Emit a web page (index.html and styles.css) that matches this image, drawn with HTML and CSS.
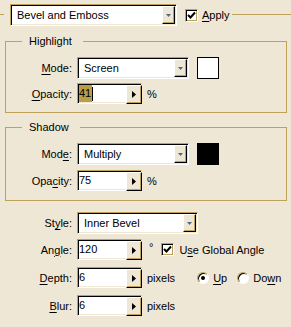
FILE: index.html
```html
<!DOCTYPE html>
<html lang="en">
<head>
    <meta charset="UTF-8">
    <meta name="viewport" content="width=device-width, initial-scale=1.0">
    <title>Bevel and Emboss</title>
    <link rel="stylesheet" href="styles.css">
</head>
<body>
    <main class="panel">
        <div class="head">
            <span class="rule rule-short"></span>
            <div class="select select-effect">
                <span class="value">Bevel and Emboss</span>
                <span class="drop"><svg width="5" height="3" viewBox="0 0 5 3"><path d="M0 0h5L2.5 3z" fill="#4c6a88"/></svg></span>
            </div>
            <label class="check check-apply">
                <span class="box"><svg width="9" height="9" viewBox="0 0 9 9"><path d="M1 4l2.5 2.5L8 1.5" fill="none" stroke="#000" stroke-width="2"/></svg></span>
                <span class="text"><u>A</u>pply</span>
            </label>
            <span class="rule rule-long"></span>
        </div>

        <fieldset class="group group-highlight">
            <legend>Highlight</legend>
            <div class="row">
                <span class="label"><u>M</u>ode:</span>
                <div class="select select-mode">
                    <span class="value">Screen</span>
                    <span class="drop"><svg width="5" height="3" viewBox="0 0 5 3"><path d="M0 0h5L2.5 3z" fill="#4c6a88"/></svg></span>
                </div>
                <span class="swatch swatch-white"></span>
            </div>
            <div class="row">
                <span class="label"><u>O</u>pacity:</span>
                <div class="spin">
                    <span class="value"><span class="sel">41</span><span class="caret"></span></span>
                    <span class="step"><svg width="4" height="7" viewBox="0 0 4 7"><path d="M0 0l4 3.5L0 7z" fill="#000"/></svg></span>
                </div>
                <span class="unit">%</span>
            </div>
        </fieldset>

        <fieldset class="group group-shadow">
            <legend>Shadow</legend>
            <div class="row">
                <span class="label">Mod<u>e</u>:</span>
                <div class="select select-mode">
                    <span class="value">Multiply</span>
                    <span class="drop"><svg width="5" height="3" viewBox="0 0 5 3"><path d="M0 0h5L2.5 3z" fill="#4c6a88"/></svg></span>
                </div>
                <span class="swatch swatch-black"></span>
            </div>
            <div class="row">
                <span class="label">Opa<u>c</u>ity:</span>
                <div class="spin">
                    <span class="value">75</span>
                    <span class="step"><svg width="4" height="7" viewBox="0 0 4 7"><path d="M0 0l4 3.5L0 7z" fill="#000"/></svg></span>
                </div>
                <span class="unit">%</span>
            </div>
        </fieldset>

        <div class="plain">
            <div class="row row-style">
                <span class="label">St<u>y</u>le:</span>
                <div class="select select-style">
                    <span class="value">Inner Bevel</span>
                    <span class="drop"><svg width="5" height="3" viewBox="0 0 5 3"><path d="M0 0h5L2.5 3z" fill="#4c6a88"/></svg></span>
                </div>
            </div>
            <div class="row row-angle">
                <span class="label">An<u>g</u>le:</span>
                <div class="spin">
                    <span class="value">120</span>
                    <span class="step"><svg width="4" height="7" viewBox="0 0 4 7"><path d="M0 0l4 3.5L0 7z" fill="#000"/></svg></span>
                </div>
                <span class="unit unit-deg">°</span>
                <label class="check check-global">
                    <span class="box"><svg width="9" height="9" viewBox="0 0 9 9"><path d="M1 4l2.5 2.5L8 1.5" fill="none" stroke="#000" stroke-width="2"/></svg></span>
                    <span class="text">U<u>s</u>e Global Angle</span>
                </label>
            </div>
            <div class="row row-spaced">
                <span class="label"><u>D</u>epth:</span>
                <div class="spin">
                    <span class="value">6</span>
                    <span class="step"><svg width="4" height="7" viewBox="0 0 4 7"><path d="M0 0l4 3.5L0 7z" fill="#000"/></svg></span>
                </div>
                <span class="unit">pixels</span>
                <label class="radio radio-up">
                    <span class="dot on"></span>
                    <span class="text"><u>U</u>p</span>
                </label>
                <label class="radio radio-down">
                    <span class="dot"></span>
                    <span class="text">Do<u>w</u>n</span>
                </label>
            </div>
            <div class="row row-spaced">
                <span class="label"><u>B</u>lur:</span>
                <div class="spin">
                    <span class="value">6</span>
                    <span class="step"><svg width="4" height="7" viewBox="0 0 4 7"><path d="M0 0l4 3.5L0 7z" fill="#000"/></svg></span>
                </div>
                <span class="unit">pixels</span>
            </div>
        </div>
    </main>
</body>
</html>
```

FILE: styles.css
```css
body {
    margin: 0;
    font-family: "Liberation Sans", Arial, sans-serif;
    font-size: 11px;
    line-height: 14px;
    color: #000;
    background: #efe7d5;
}

.panel {
    width: 291px;
    height: 327px;
    overflow: hidden;
}

u {
    text-decoration-thickness: 1px;
    text-underline-offset: 2px;
}

/* top line with effect picker */
.head {
    display: flex;
    align-items: center;
    height: 22px;
    margin-top: 4px;
}
.rule {
    align-self: flex-start;
    height: 1px;
    margin-top: 10px;
    background: #bfa259;
}
.rule-short {
    width: 4px;
    margin-right: 6px;
}
.rule-long {
    flex: 1;
    margin-left: 2px;
}

/* sunken fields */
.select,
.spin {
    display: flex;
    box-sizing: border-box;
    border: 1px solid;
    border-color: #bfa259 #fff #fff #bfa259;
    box-shadow: inset 1px 1px #000, inset -1px -1px #efe7d5;
    background: #fff;
    padding: 1px;
}
.select {
    height: 22px;
}
.select .value {
    flex: 1;
    padding-left: 5px;
    line-height: 18px;
    white-space: nowrap;
}
.drop {
    display: grid;
    place-content: center;
    box-sizing: border-box;
    width: 13px;
    border: 1px solid;
    border-color: #fff #000 #000 #fff;
    box-shadow: inset -1px -1px #bfa259;
    background: #efe7d5;
}
.select-effect {
    width: 167px;
}
.select-mode {
    width: 112px;
}
.select-style {
    width: 121px;
}

.spin {
    width: 65px;
    height: 21px;
}
.spin .value {
    flex: 1;
    display: flex;
    align-items: center;
    line-height: 17px;
}
.sel {
    background: #b89c48;
    padding-right: 1px;
}
.caret {
    width: 1px;
    height: 14px;
    background: #000;
}
.step {
    display: grid;
    place-content: center;
    box-sizing: border-box;
    width: 16px;
    margin: 0 -2px -2px 0;
    border: 1px solid;
    border-color: #fff #000 #000 #fff;
    box-shadow: inset -1px -1px #bfa259;
    background: #efe7d5;
}

/* check boxes and radios */
.check,
.radio {
    display: flex;
    align-items: center;
}
.box {
    display: grid;
    place-content: center;
    box-sizing: border-box;
    width: 13px;
    height: 13px;
    border: 1px solid;
    border-color: #bfa259 #fff #fff #bfa259;
    box-shadow: inset 1px 1px #000, inset -1px -1px #bfa259;
    background: #fff;
}
.check-apply {
    margin-left: 8px;
}
.check-apply .text {
    margin-left: 4px;
}
.check-global {
    margin-left: 8px;
}
.check-global .text {
    margin-left: 5px;
}

.dot {
    display: grid;
    place-content: center;
    box-sizing: border-box;
    width: 12px;
    height: 12px;
    border-radius: 50%;
    border: 1px solid;
    border-color: #bfa259 #fff #fff #bfa259;
    box-shadow: inset 1px 1px #000;
    background: #fff;
}
.dot.on::after {
    content: "";
    width: 4px;
    height: 4px;
    border-radius: 50%;
    background: #000;
}
.radio .text {
    margin-left: 4px;
}
.radio-up {
    margin-left: 22px;
}
.radio-down {
    margin-left: 10px;
}

/* groups */
.group {
    margin: 8px 4px 0 5px;
    padding: 9px 0 8px;
    border: 1px solid #bfa259;
    min-width: 0;
}
.group legend {
    margin-left: 16px;
    padding: 0 11px 0 7px;
    line-height: 14px;
}
.group-shadow {
    margin-top: 7px;
    padding-bottom: 9px;
}

.row {
    display: flex;
    align-items: center;
}
.row + .row {
    margin-top: 5px;
}
.group-highlight .row + .row {
    margin-top: 4px;
}
.label {
    width: 66px;
    margin-right: 5px;
    text-align: right;
    white-space: nowrap;
}
.swatch {
    box-sizing: border-box;
    width: 22px;
    height: 22px;
    margin-left: 8px;
    border: 1px solid #000;
}
.swatch-white {
    background: #fff;
}
.swatch-black {
    background: #000;
}
.unit {
    margin-left: 5px;
}
.unit-deg {
    margin-left: 7px;
    align-self: flex-start;
    margin-top: 1px;
}

.plain {
    margin-top: 11px;
    padding-left: 6px;
}
.plain .row-spaced {
    margin-top: 7px;
}
```
